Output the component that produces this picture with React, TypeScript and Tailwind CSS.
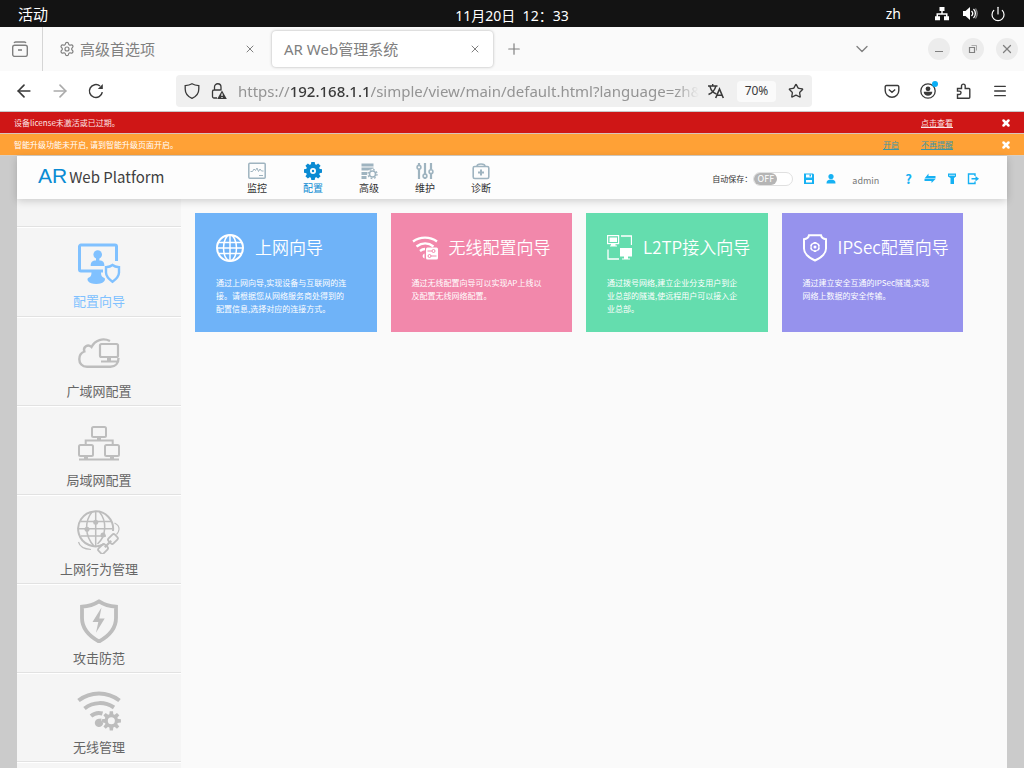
import { useState } from "react";
import type { ReactNode } from "react";
import { ArrowLeft, ArrowRight, ChevronDown, Menu, Plus, Power, Settings, Star, X } from "lucide-react";

interface SideItem {
    label: string;
    icon: ReactNode;
}

interface Wizard {
    title: string;
    desc: string;
    color: string;
    icon: ReactNode;
}

const Monitor = ({ x, y, w, h }: { x: number; y: number; w: number; h: number }) => (
    <>
        <rect x={x} y={y} width={w} height={h} rx="1.5" />
        <path d={`M${x + w / 2} ${y + h}v3`} strokeWidth="4" />
    </>
);

const sideItems: SideItem[] = [
    {
        label: "配置向导",
        icon: (
            <svg viewBox="0 0 44 44" className="w-11 h-11" fill="none" stroke="currentColor">
                <path d="M39.5 19V4.5A1.5 1.5 0 0 0 38 3H4a1.5 1.5 0 0 0-1.500 1.500v23A1.500 1.500 0 0 0 4 29h22" strokeWidth="3" />
                <g fill="currentColor" stroke="none">
                    <circle cx="20.700" cy="12.500" r="4.300" />
                    <path d="M19 15h3.400v3.500c3.500 0 5 1.500 5 5.500H13.700c0-4 1.500-5.500 5.300-5.500Z" />
                    <path d="M14.500 29.500h9.500c0 4 .5 5.200 3.500 6.500 1.500 1.500 0 6-8.300 6s-9.700-4.500-8.200-6c3-1.300 3.500-2.500 3.500-6.500Z" />
                </g>
                <path d="M35.500 23c-2 1.600-4 2-6.500 2.200v5.300c0 4 3 6.700 6.500 9.200 3.500-2.500 6.500-5.200 6.500-9.200v-5.300c-2.500-.2-4.500-.6-6.500-2.200Z" strokeWidth="2.400" />
            </svg>
        ),
    },
    {
        label: "广域网配置",
        icon: (
            <svg viewBox="0 0 44 44" className="w-11 h-11" fill="none" stroke="currentColor" strokeWidth="2">
                <path d="M41.500 26c0 5-3 8.700-8 8.700H10c-5 0-7.700-3.500-7.700-7.500 0-4 2-6.500 5-7.700-1.500-4.500 3.500-8 7.200-4.500C18 8 26 5.500 33 9" strokeWidth="2.400" />
                <rect x="23" y="12" width="18" height="13" rx="1.500" strokeWidth="2.200" />
                <path d="M32 25v4" strokeWidth="4" />
                <path d="M24 29.500h16" />
            </svg>
        ),
    },
    {
        label: "局域网配置",
        icon: (
            <svg viewBox="0 0 44 44" className="w-11 h-11" fill="none" stroke="currentColor" strokeWidth="2">
                <Monitor x={15} y={6} w={14} h={10} />
                <Monitor x={2} y={24} w={14} h={11} />
                <Monitor x={28} y={24} w={14} h={11} />
                <path d="M8.700 24v-4.500h27V24M2 38.500h40" />
            </svg>
        ),
    },
    {
        label: "上网行为管理",
        icon: (
            <svg viewBox="0 0 44 44" className="w-11 h-11" fill="none" stroke="currentColor" strokeWidth="1.500">
                <path d="M27 34.200A17.500 17.500 0 1 1 36 21" strokeWidth="2" />
                <path d="M18.700 1v35M1.500 18.700h34M4 11.500h30M4 26h25M15 2C7.500 11 7.500 26 17 36M22.500 2C30 11 29.500 26 20.500 34" />
                <g fill="currentColor" stroke="none">
                    <circle cx="18.700" cy="12.300" r="2.500" />
                    <circle cx="10" cy="19.300" r="2.500" />
                    <circle cx="26" cy="25" r="2.500" />
                </g>
                <path d="M37.500 13c3 1.500 4.800 4 4.500 6.500-.2 2-1 3.500-2.500 5M1.500 32c1 4 5 7 12.500 7.500" strokeWidth="1.200" />
                <g transform="rotate(-45 31 34)" strokeWidth="1.800">
                    <rect x="19.500" y="30.500" width="9" height="7" rx="1.800" />
                    <rect x="33.500" y="30.500" width="9" height="7" rx="1.800" />
                    <path d="M26.500 34h9" strokeWidth="2.200" />
                </g>
            </svg>
        ),
    },
    {
        label: "攻击防范",
        icon: (
            <svg viewBox="0 0 44 44" className="w-11 h-11" fill="none" stroke="currentColor">
                <path d="M22 2.400C16.500 6 11.500 7.400 5 7.700V19c0 11 8 18.500 17 23.500 9-5 17-12.500 17-23.500V7.700C32.500 7.400 27.500 6 22 2.400Z" strokeWidth="3.800" />
                <path d="m24.500 8.500-9 14.500h5.800l-2.300 10.700 8.700-14.200h-5.400Z" fill="currentColor" stroke="none" />
            </svg>
        ),
    },
    {
        label: "无线管理",
        icon: (
            <svg viewBox="0 0 44 44" className="w-11 h-11" fill="none" stroke="currentColor" strokeWidth="4">
                <path d="M1.500 12.500c12-9.500 29-9.500 41 0M7.500 20.500c9-7 20.500-7 29.500-1M14 28c3.500-3 7.500-3.700 11.500-2.500" />
                <path d="M24.500 30.500c-1 1.500.5 3 1.700 4.700a4.200 4.200 0 1 1-3.500-4.500Z" fill="currentColor" stroke="none" />
                <g transform="translate(24.500 23) scale(.82)">
                    <circle cx="12" cy="12" r="6.300" strokeWidth="4" />
                    {[0, 45, 90, 135, 180, 225, 270, 315].map((a) => (
                        <path key={a} d="M9.500 5 10 .3h4L14.500 5Z" fill="currentColor" stroke="none" transform={`rotate(${a} 12 12)`} />
                    ))}
                </g>
            </svg>
        ),
    },
];

const wizards: Wizard[] = [
    {
        title: "上网向导",
        desc: "通过上网向导,实现设备与互联网的连\n接。请根据您从网络服务商处得到的\n配置信息,选择对应的连接方式。",
        color: "bg-[#6fb3f8]",
        icon: (
            <svg viewBox="0 0 28 28" className="w-7 h-7 shrink-0" fill="none" stroke="currentColor" strokeWidth="1.500">
                <circle cx="14" cy="14" r="13" strokeWidth="2" />
                <ellipse cx="14" cy="14" rx="6.500" ry="13" />
                <path d="M14 1v26M1 14h26M3 8.500h22M3 19.500h22" />
            </svg>
        ),
    },
    {
        title: "无线配置向导",
        desc: "通过无线配置向导可以实现AP上线以\n及配置无线网络配置。",
        color: "bg-[#f288ab]",
        icon: (
            <svg viewBox="0 0 26 28" className="w-[26px] h-7 shrink-0" fill="none" stroke="currentColor">
                <path d="M1 7.500c7-5.300 17-5.300 24 0M4.500 12.500c5.500-4 12-4 17 0M8 17c1.700-1.400 3.500-2 5-2" strokeWidth="2.300" />
                <path d="M12.500 19.500c-3 1.500-2 4.500 0 5Z" fill="currentColor" stroke="none" />
                <rect x="14" y="13.500" width="12" height="12" rx="1.500" fill="currentColor" stroke="none" />
                <g className="text-[#f288ab]">
                    <path d="M15.500 17h4.500M19 22h5.500" />
                    <circle cx="21.500" cy="17" r="1.500" />
                    <circle cx="17.500" cy="22" r="1.500" />
                </g>
            </svg>
        ),
    },
    {
        title: "L2TP接入向导",
        desc: "通过拨号网络,建立企业分支用户到企\n业总部的隧道,使远程用户可以接入企\n业总部。",
        color: "bg-[#64ddae]",
        icon: (
            <svg viewBox="0 0 25 28" className="w-[25px] h-7 shrink-0" fill="none" stroke="currentColor">
                <path d="M14 2h10.500v9M1 15.500V25h11" strokeWidth="1.300" />
                <rect x=".6" y="1.600" width="11" height="8" strokeWidth="1.200" />
                <path d="M2.500 3.500h7.500v4.500H2.500ZM4 10h4.500v1.500H10v1H3v-1h1ZM13 14h12v8.500H13ZM17 22h4v2.500h2v1h-8v-1h2Z" fill="currentColor" stroke="none" />
            </svg>
        ),
    },
    {
        title: "IPSec配置向导",
        desc: "通过建立安全互通的IPSec隧道,实现\n网络上数据的安全传输。",
        color: "bg-[#9692ed]",
        icon: (
            <svg viewBox="0 0 24 28" className="w-6 h-7 shrink-0" fill="none" stroke="currentColor">
                <path d="M6 1.200h12c.5 2.300 2.300 3.700 5 4v9.300c0 5-4.500 9-11 12-6.500-3-11-7-11-12V5.200c2.700-.3 4.500-1.700 5-4Z" strokeWidth="2" />
                <path d="M12 8v1.500M12 16.500V18M7.700 10.500l1.200.7M15.100 14.800l1.200.7M7.700 15.500l1.200-.7M15.100 11.200l1.200-.7" strokeWidth="2.200" />
                <circle cx="12" cy="13" r="4" strokeWidth="1.300" />
                <circle cx="12" cy="13" r="1.500" fill="currentColor" stroke="none" />
            </svg>
        ),
    },
];

const navItems: SideItem[] = [
    {
        label: "监控",
        icon: (
            <svg viewBox="0 0 18 18" className="w-[18px] h-[18px]" fill="none" stroke="currentColor">
                <rect x=".8" y="1.300" width="16.400" height="15" rx="1" strokeWidth="1.500" />
                <path d="M2.500 9.500h2l1.500-2.500 1.500 1.500L9 6l1.500 3.500L12 7l1.500 2h2M11 13.500h4" />
            </svg>
        ),
    },
    {
        label: "配置",
        icon: (
            <svg viewBox="0 0 18 18" className="w-[18px] h-[18px] text-[#0a8bd3]" fill="none" stroke="currentColor">
                <circle cx="9" cy="9" r="5" strokeWidth="4" />
                {[0, 45, 90, 135, 180, 225, 270, 315].map((a) => (
                    <path key={a} d="M6.800 3 7.300 0h3.400l.5 3Z" fill="currentColor" stroke="none" transform={`rotate(${a} 9 9)`} />
                ))}
                <circle cx="9" cy="9" r="1.200" fill="currentColor" stroke="none" />
            </svg>
        ),
    },
    {
        label: "高级",
        icon: (
            <svg viewBox="0 0 18 18" className="w-[18px] h-[18px]" fill="none" stroke="currentColor">
                <path d="M1.500 3h12M1.500 7h12M1.500 11.500h6M1.500 15.500h5" strokeWidth="3" />
                <circle cx="12.500" cy="12" r="5.300" fill="#fdfdfd" stroke="none" />
                <circle cx="12.500" cy="12" r="3" strokeWidth="1.500" />
                <circle cx="12.500" cy="12" r="4.500" strokeWidth="1.300" strokeDasharray="1.770 1.770" />
            </svg>
        ),
    },
    {
        label: "维护",
        icon: (
            <svg viewBox="0 0 18 18" className="w-[18px] h-[18px]" fill="none" stroke="currentColor" strokeWidth="1.600">
                <path d="M3 1v2M3 7.500V17M9 1v11M9 16v1M15 1v6.500M15 12v5" strokeWidth="2.200" />
                <circle cx="3" cy="5.300" r="1.900" />
                <circle cx="9" cy="14" r="1.900" />
                <circle cx="15" cy="9.700" r="1.900" />
            </svg>
        ),
    },
    {
        label: "诊断",
        icon: (
            <svg viewBox="0 0 18 18" className="w-[18px] h-[18px]" fill="none" stroke="currentColor">
                <rect x="1.200" y="4.500" width="15.600" height="12" rx="1.500" strokeWidth="1.600" />
                <path d="M5 4.500c0-2 1-2.500 4-2.500s4 .5 4 2.500" strokeWidth="1.600" />
                <path d="M9 7.500v6M6 10.500h6" strokeWidth="2" />
            </svg>
        ),
    },
];

function SystemBar() {
    return (
        <div className="grid grid-cols-3 items-center h-[27px] px-[18px] bg-[#131313] text-white text-[15px] leading-5">
            <span className="pt-px">活动</span>
            <span className="text-center text-[14px] pt-1 whitespace-pre">11月20日  12：33</span>
            <div className="flex items-center justify-end">
                <span className="mr-[33px] text-[14px]">zh</span>
                <svg viewBox="0 0 16 16" className="w-4 h-4 mr-3" fill="currentColor">
                    <path d="M5.500 1h5v4H8.700v2.300h4.800v3H15v4h-5v-4h2V8.700H4v1.600h2v4H1v-4h1.500v-3h4.800V5H5.500Z" />
                </svg>
                <svg viewBox="0 0 16 16" className="w-4 h-4 mr-3" fill="none" stroke="currentColor" strokeWidth="1.300">
                    <path d="M1 5h2.500L8 1v13l-4.500-4H1Z" fill="currentColor" stroke="none" />
                    <path d="M9.500 5c1.500 1.500 1.500 3.500 0 5M11.500 3c2.500 2.500 2.500 6.500 0 9" />
                    <path d="M13.500 2.500c2 3 2 7 0 10" opacity=".5" />
                </svg>
                <Power className="w-4 h-4" strokeWidth={1.8} />
            </div>
        </div>
    );
}

function TabStrip() {
    return (
        <div className="flex h-11 bg-[#fafafa] text-[#808080] text-[15px]">
            <button aria-label="标签" className="flex items-center justify-center w-[43px] border-r border-[#d5d5d5] pr-[2px]">
                <svg viewBox="0 0 16 16" className="w-4 h-4" fill="none" stroke="currentColor" strokeWidth="1.400">
                    <path d="M2.100 2A1.500 1.500 0 0 1 3.500 1h9a1.500 1.500 0 0 1 1.400 1" />
                    <rect x=".7" y="4.200" width="14.600" height="11.200" rx="2" />
                    <path d="M6 9h4" strokeWidth="1.600" />
                </svg>
            </button>
            <div className="flex items-center w-[229px] pl-4 pr-4">
                <Settings className="w-4 h-4 mr-[5px]" strokeWidth={1.8} />
                <span className="flex-1">高级首选项</span>
                <button aria-label="关闭">
                    <X className="w-3 h-3" strokeWidth={2} />
                </button>
            </div>
            <div className="flex items-center w-[221px] my-1 px-3 bg-white rounded shadow-[0_0_3px_rgba(0,0,0,0.3)]">
                <span className="flex-1">AR Web管理系统</span>
                <button aria-label="关闭">
                    <X className="w-3 h-3" strokeWidth={2} />
                </button>
            </div>
            <button aria-label="新标签" className="ml-3">
                <Plus className="w-[18px] h-[18px]" strokeWidth={1.6} />
            </button>
            <div className="flex flex-1 items-center justify-end gap-3 pr-[6px]">
                <button aria-label="列出标签" className="mr-11">
                    <ChevronDown className="w-5 h-5" strokeWidth={1.6} />
                </button>
                <button aria-label="最小化" className="flex items-center justify-center w-[22px] h-[22px] rounded-full bg-[#ececec]">
                    <svg viewBox="0 0 10 10" className="w-[10px] h-[10px]" stroke="currentColor">
                        <path d="M1 7.500h8" />
                    </svg>
                </button>
                <button aria-label="还原" className="flex items-center justify-center w-[22px] h-[22px] rounded-full bg-[#ececec]">
                    <svg viewBox="0 0 10 10" className="w-[10px] h-[10px]" fill="none" stroke="currentColor">
                        <path d="M1.500 3.500h5v5h-5Z" strokeWidth="1.200" />
                        <path d="M3.500 1.500h5v5" opacity=".6" />
                    </svg>
                </button>
                <button aria-label="关闭窗口" className="flex items-center justify-center w-[22px] h-[22px] rounded-full bg-[#ececec]">
                    <X className="w-[14px] h-[14px]" strokeWidth={2.2} />
                </button>
            </div>
        </div>
    );
}

function Toolbar() {
    return (
        <div className="flex items-center h-[41px] bg-white border-b border-[#c8c8c8] text-[#3a3a3a]">
            <div className="flex items-center gap-4 w-[176px] pl-[14px]">
                <button aria-label="后退">
                    <ArrowLeft className="w-5 h-5" strokeWidth={2} />
                </button>
                <button aria-label="前进" className="text-[#ababab]">
                    <ArrowRight className="w-5 h-5" strokeWidth={2} />
                </button>
                <button aria-label="刷新">
                    <svg viewBox="0 0 20 20" className="w-5 h-5" fill="none" stroke="currentColor" strokeWidth="1.500">
                        <path d="M16.300 11.200A6.500 6.500 0 1 1 14 5" />
                        <path d="M16.800 3v5h-5Z" fill="currentColor" stroke="none" />
                    </svg>
                </button>
            </div>
            <div className="flex flex-1 min-w-0 items-center h-8 px-2 rounded bg-[#f0f0f0]">
                <svg viewBox="0 0 16 16" className="w-4 h-4 shrink-0 mr-[11px]" fill="none" stroke="currentColor" strokeWidth="1.300">
                    <path d="M8 .8C6 2 4 2.500 1.200 2.700V6c0 4.500 2.500 7.500 6.800 9.300 4.300-1.800 6.800-4.800 6.800-9.300V2.700C12 2.500 10 2 8 .8Z" />
                </svg>
                <svg viewBox="0 0 16 16" className="w-4 h-4 shrink-0 mr-[11px]" fill="none" stroke="currentColor" strokeWidth="1.300">
                    <path d="M6 15H3a1.500 1.500 0 0 1-1.500-1.500V8.500A1.500 1.500 0 0 1 3 7h6.500M3.500 7V4a3.200 3.200 0 0 1 6.500 0v3.500" />
                    <path d="M11 7.500 15.800 16H6.200Z" fill="currentColor" stroke="none" />
                    <path d="M11 10.500v2.500M11 14v1" stroke="#f0f0f0" />
                </svg>
                <label className="flex flex-1 min-w-0 text-[15px] leading-5 text-[#949494] [mask-image:linear-gradient(to_left,transparent,black_24px)]">
                    <span>https://</span>
                    <span className="font-medium text-[#3a3a3a]">192.168.1.1</span>
                    <input
                        type="text"
                        defaultValue="/simple/view/main/default.html?language=zh&page"
                        className="flex-1 min-w-0 bg-transparent outline-none"
                    />
                </label>
                <button aria-label="翻译" className="ml-2 mr-3">
                    <svg viewBox="0 0 18 16" className="w-[18px] h-4" fill="none" stroke="currentColor" strokeWidth="1.400">
                        <path d="M1 3h9.500M5.700 1v2M3 3.500c1 4 3.500 6.500 6.500 7.500M8.700 3.500C7.700 7.500 5 10 1.500 11.500" />
                        <path d="m8.700 15 3.800-9 3.800 9M10 12.300h5" strokeWidth="1.600" />
                    </svg>
                </button>
                <button className="w-[39px] h-[21px] mr-3 rounded-sm bg-[#fafafa] text-[12px]">70%</button>
                <button aria-label="收藏">
                    <Star className="w-4 h-4" strokeWidth={2} />
                </button>
            </div>
            <div className="flex items-center justify-end gap-5 w-[212px] pr-4">
                <button aria-label="Pocket">
                    <svg viewBox="0 0 16 16" className="w-4 h-4" fill="none" stroke="currentColor" strokeWidth="1.400">
                        <path d="M2.500 2.500h11A1.300 1.300 0 0 1 14.800 4v3.500a6.800 6.800 0 0 1-13.600 0V4a1.300 1.300 0 0 1 1.300-1.500ZM4.800 6.500 8 9.300l3.200-2.800" />
                    </svg>
                </button>
                <button aria-label="账户" className="relative">
                    <svg viewBox="0 0 16 16" className="w-4 h-4" fill="currentColor">
                        <circle cx="8" cy="8" r="7.200" fill="none" stroke="currentColor" strokeWidth="1.300" />
                        <circle cx="8" cy="5.800" r="2.400" />
                        <path d="M3.700 8.800h8.600c0 2.500-2 4-4.300 4s-4.300-1.500-4.300-4Z" />
                    </svg>
                    <span className="absolute -top-[2px] -right-[2px] w-[6px] h-[6px] rounded-full bg-[#0aaef5]" />
                </button>
                <button aria-label="扩展">
                    <svg viewBox="0 0 16 16" className="w-4 h-4" fill="none" stroke="currentColor" strokeWidth="1.400">
                        <path d="M1.500 15.200V11.500h1.800a1.700 1.700 0 0 0 0-3.400H1.500V5.500h4V3a1.800 1.800 0 0 1 3.700 0v2.500h3.800a.8.8 0 0 1 .8.8v8a.9.9 0 0 1-.9.9Z" />
                    </svg>
                </button>
                <button aria-label="菜单">
                    <Menu className="w-4 h-4" strokeWidth={2} />
                </button>
            </div>
        </div>
    );
}

function Header() {
    const [autoSave, setAutoSave] = useState(false);

    return (
        <header className="relative flex h-[43px] bg-[#fdfdfd] shadow-[0_2px_8px_rgba(0,0,0,0.18)]">
            <div className="flex items-baseline w-[212px] pl-[21px] pt-[6px]">
                <span className="font-['Liberation_Sans',sans-serif] text-[21px] leading-7 text-[#0a8bd3]">AR</span>
                <span className="ml-[2px] text-[15px] leading-7 text-[#404040]">Web Platform</span>
            </div>
            <nav className="flex pt-[6px]">
                {navItems.map((item) => (
                    <a key={item.label} href="#" className="flex flex-col items-center w-14 text-[#9fb4c0]">
                        {item.icon}
                        <span className={item.label === "配置" ? "text-[10px] leading-4 text-[#0a8bd3]" : "text-[10px] leading-4 text-[#333]"}>
                            {item.label}
                        </span>
                    </a>
                ))}
            </nav>
            <div className="flex flex-1 items-center justify-end pr-7 pt-[3px] text-[#16b1f3]">
                <label className="flex items-center text-[8px] text-[#333]">
                    自动保存：
                    <input type="checkbox" className="sr-only" checked={autoSave} onChange={() => setAutoSave(!autoSave)} />
                    <span className="flex w-10 h-[14px] ml-px rounded-full border border-[#e0e0e0] bg-white">
                        <span className="w-[23px] rounded-full bg-[#b5b5b5] text-center text-[9px] leading-3 text-white">
                            {autoSave ? "ON" : "OFF"}
                        </span>
                    </span>
                </label>
                <button aria-label="保存" className="ml-[10px]">
                    <svg viewBox="0 0 12 12" className="w-3 h-3" fill="currentColor">
                        <path fillRule="evenodd" d="M1 .5h9l1 1V11H1ZM3 1.500v3h6v-3ZM3 7v2.500h6V7Z" />
                        <path d="M6.500 1.500h1.500v2H6.500Z" />
                    </svg>
                </button>
                <svg viewBox="0 0 12 12" className="w-3 h-3 ml-[10px]" fill="currentColor">
                    <circle cx="6" cy="3.500" r="2.600" />
                    <path d="M1.500 10.500c0-3 1.500-4 4.500-4s4.500 1 4.500 4Z" />
                </svg>
                <span className="ml-[15px] mt-[3px] text-[9px] leading-3 text-[#777]">admin</span>
                <button className="ml-[26px] text-[13px] leading-3 font-bold">?</button>
                <button aria-label="切换" className="ml-3">
                    <svg viewBox="0 0 12 12" className="w-3 h-3" fill="currentColor">
                        <path d="M4.500.5V3h7v2.500H.5ZM7.500 10V8h-7V6h11Z" />
                    </svg>
                </button>
                <button aria-label="工具" className="ml-[10px]">
                    <svg viewBox="0 0 12 12" className="w-3 h-3" fill="currentColor">
                        <path d="M2 .5h8v3L8 5v6H4.500V5L2 3.500Z" />
                        <path d="M3 2.300h6" stroke="#fdfdfd" strokeWidth=".7" />
                    </svg>
                </button>
                <button aria-label="退出" className="ml-[9px]">
                    <svg viewBox="0 0 12 12" className="w-3 h-3" fill="none" stroke="currentColor" strokeWidth="1.400">
                        <path d="M8 3V1H1.500v9.500H8v-2M4.500 5.700H9" />
                        <path d="M8.500 3 12 5.700 8.500 8.500Z" fill="currentColor" stroke="none" />
                    </svg>
                </button>
            </div>
        </header>
    );
}

export default function App() {
    return (
        <div lang="zh-CN" className="flex flex-col min-h-screen bg-[#cbcbcb] font-['Noto_Sans','Noto_Sans_CJK_SC',sans-serif]">
            <SystemBar />
            <TabStrip />
            <Toolbar />

            <div className="font-['Noto_Sans_CJK_SC',sans-serif] text-[8px]">
                <div className="flex items-center h-[22px] pl-[14px] pr-[13px] bg-[#cf1616] border-b border-[#d8c4bc] text-[#fbe4e4]">
                    <span className="flex-1">设备license未激活或已过期。</span>
                    <a href="#" className="mr-12 underline">点击查看</a>
                    <button aria-label="关闭" className="text-white">
                        <X className="w-[10px] h-[10px]" strokeWidth={6} />
                    </button>
                </div>
                <div className="flex items-center h-[22px] pl-[14px] pr-[13px] bg-[#ffa136] border-b border-[#d8cfc4] text-white">
                    <span className="flex-1">智能升级功能未开启, 请到智能升级页面开启。</span>
                    <a href="#" className="mr-[22px] underline text-[#3d96a5]">开启</a>
                    <a href="#" className="mr-12 underline text-[#3d96a5]">不再提醒</a>
                    <button aria-label="关闭">
                        <X className="w-[10px] h-[10px]" strokeWidth={6} />
                    </button>
                </div>
            </div>

            <div className="flex flex-1 flex-col mx-[17px] bg-[#fafafa] font-['Noto_Sans_CJK_SC',sans-serif]">
                <Header />
                <div className="flex flex-1">
                    <aside className="w-[164px] shrink-0 bg-[#f5f5f5]">
                        <div className="h-7 border-b border-[#e2e2e2]" />
                        {sideItems.map((item, i) => (
                            <a
                                key={item.label}
                                href="#"
                                className={
                                    i === 0
                                        ? "flex flex-col items-center pt-[14px] pb-[5px] border-t border-t-white border-b border-b-[#e2e2e2] text-[#80c1ff]"
                                        : "flex flex-col items-center pt-[14px] pb-1 border-t border-t-white border-b border-b-[#e2e2e2] text-[#bdbdbd]"
                                }
                            >
                                {item.icon}
                                <span className={i === 0 ? "mt-[5px] text-[13px] leading-5" : "mt-[5px] text-[13px] leading-5 text-[#666]"}>
                                    {item.label}
                                </span>
                            </a>
                        ))}
                        <div className="border-t border-white" />
                    </aside>
                    <main className="grid flex-1 grid-cols-4 content-start gap-[14px] pt-[14px] pl-[14px] pr-11">
                        {wizards.map((w) => (
                            <a key={w.title} href="#" className={`h-[119px] pt-[21px] pl-[21px] text-white ${w.color}`}>
                                <div className="flex items-start gap-[11px]">
                                    {w.icon}
                                    <h2 className="text-[17px] leading-[26px] font-[350] whitespace-nowrap">{w.title}</h2>
                                </div>
                                <p className="mt-[14px] text-[8px] leading-[13px] whitespace-pre-line">{w.desc}</p>
                            </a>
                        ))}
                    </main>
                </div>
            </div>
        </div>
    );
}
